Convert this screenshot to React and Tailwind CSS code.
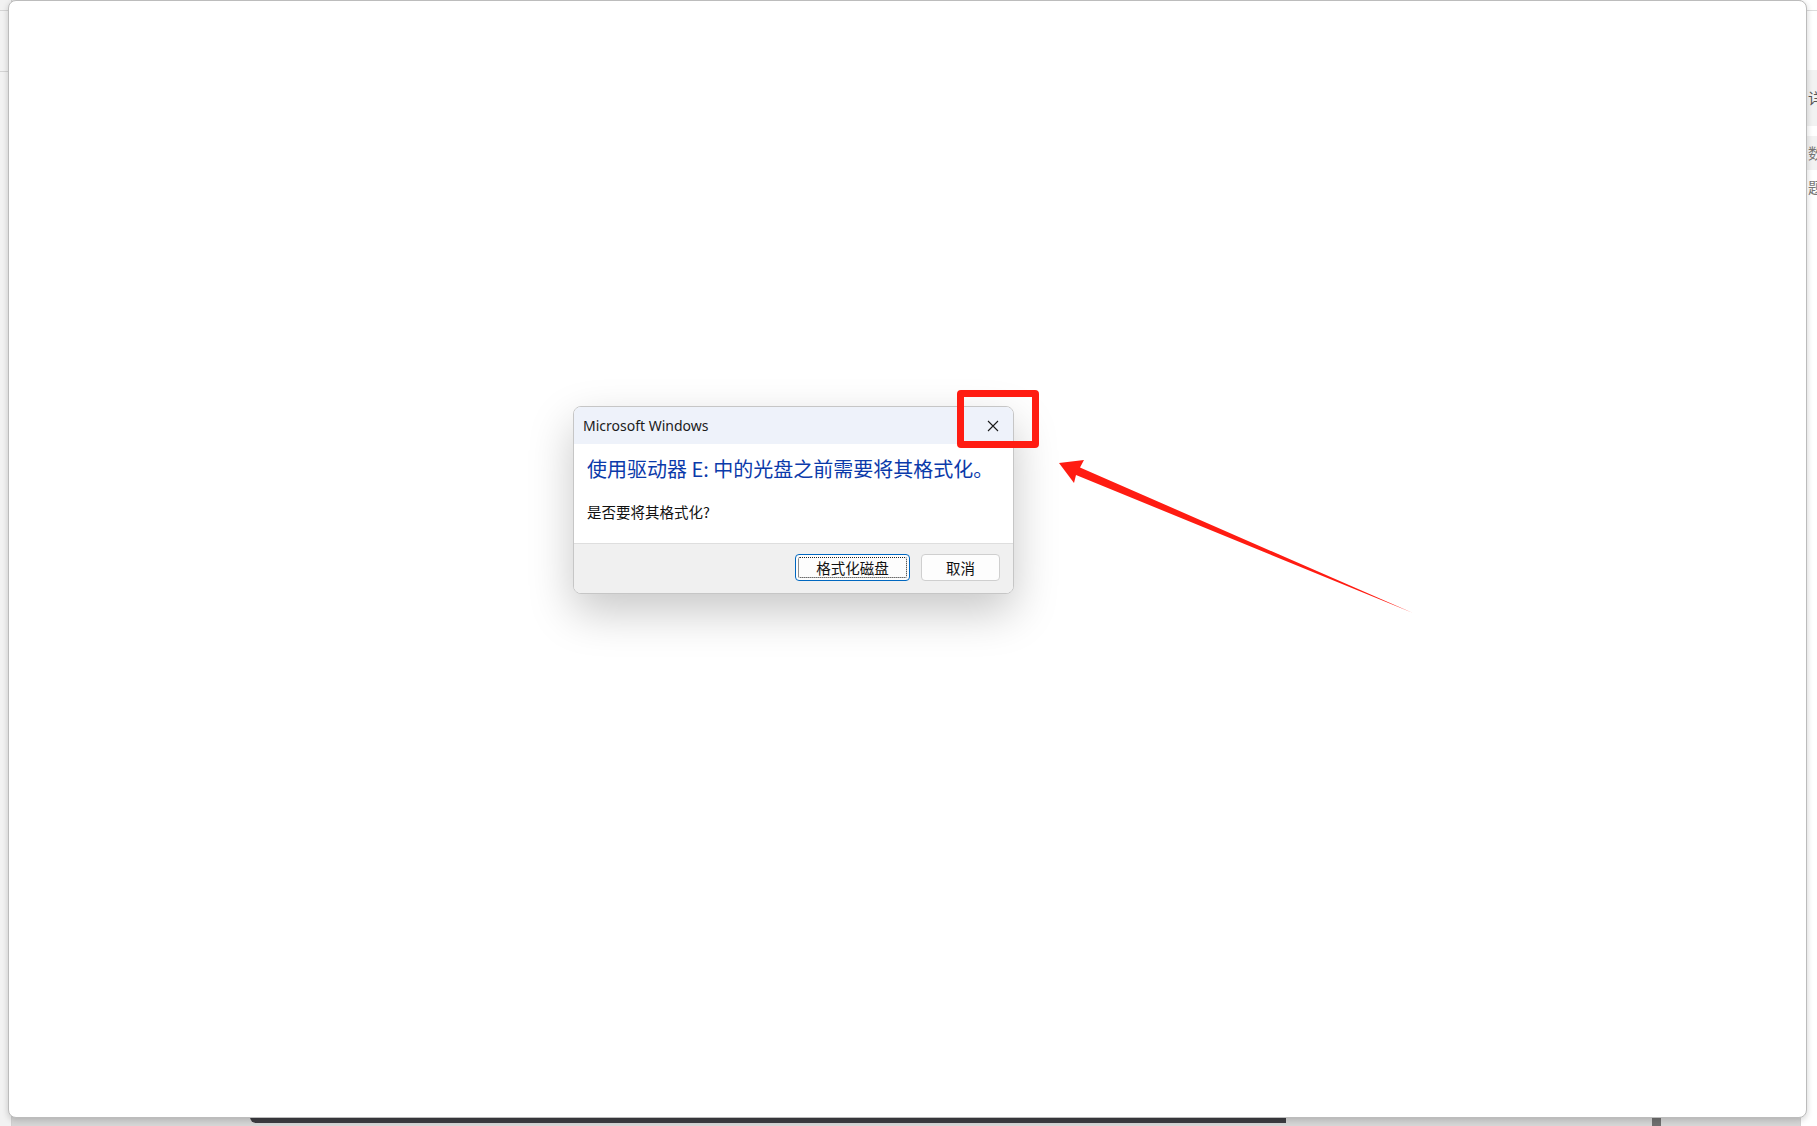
import React from "react";

const cjk = { fontFamily: '"Noto Sans CJK SC", "Noto Sans", sans-serif' };

function CloseIcon() {
  return (
    <svg width="12" height="12" viewBox="0 0 12 12" fill="none">
      <path d="M1 1L11 11M11 1L1 11" stroke="#1a1a1a" strokeWidth="1.1" />
    </svg>
  );
}

function Dialog() {
  return (
    <div className="absolute left-[573px] top-[406px] w-[441px] rounded-[8px] border border-[#c6c6c6] bg-white overflow-hidden shadow-[0_18px_45px_rgba(0,0,0,0.22)]">
      <div className="h-[37px] bg-[#eef2fa] flex items-center justify-between pl-[9px] pr-[14px]">
        <span
          className="text-[14px] text-[#1b1b1b]"
          style={{ fontFamily: '"Noto Sans", "Open Sans", sans-serif' }}
        >
          Microsoft Windows
        </span>
        <CloseIcon />
      </div>
      <div className="h-[99px] px-[13px] pt-[11px]" style={cjk}>
        <p className="text-[20px] leading-[28px] text-[#0b3aaa]">
          使用驱动器 E: 中的光盘之前需要将其格式化。
        </p>
        <p className="mt-[18px] text-[14.5px] leading-[22px] text-[#111]">是否要将其格式化?</p>
      </div>
      <div className="border-t border-[#dedede] bg-[#f0f0f0] flex justify-end gap-[11px] pt-[10px] pb-[12px] pr-[13px]" style={cjk}>
        <button className="w-[115px] h-[27px] rounded-[4px] border border-[#0067c0] bg-[#fdfdfd] p-[2px]">
          <span className="flex h-full w-full items-center justify-center border border-dotted border-[#222] rounded-[2px] text-[14.5px] text-[#111]">
            格式化磁盘
          </span>
        </button>
        <button className="w-[79px] h-[27px] rounded-[4px] border border-[#cfcfcf] bg-[#fdfdfd] text-[14.5px] text-[#111] flex items-center justify-center">
          取消
        </button>
      </div>
    </div>
  );
}

function Arrow() {
  return (
    <svg className="absolute left-[1040px] top-[450px] pointer-events-none" width="390" height="180" viewBox="0 0 390 180">
      <polygon
        points="19,13 44,10 40,17.5 373,163 36,25 34,33"
        fill="#ff1c12"
      />
    </svg>
  );
}

export default function App() {
  return (
    <div className="relative w-[1817px] h-[1126px] overflow-hidden bg-[linear-gradient(180deg,#e4e4e4,#d6d6d6)]">
      {/* windows behind */}
      <div className="absolute left-0 top-0 w-[12px] h-[1126px] bg-[#f2f2f2] border-r border-[#d0d0d0]">
        <div className="mt-[10px] border-t border-[#d4d4d4]" />
        <div className="mt-[60px] border-t border-[#d4d4d4]" />
      </div>
      <div className="absolute left-[1800px] top-0 w-[40px] h-[1126px] bg-white border-l border-[#d0d0d0]" style={cjk}>
        <div className="mt-[10px] border-t border-[#dcdcdc]" />
        <div className="mt-[59px] h-[56px] bg-[#f2f2f2] flex items-center pl-[7px] text-[15px] text-[#555]">详</div>
        <div className="mt-[10px] h-[34px] bg-[#f2f2f2] flex items-center pl-[7px] text-[15px] text-[#777]">数</div>
        <div className="h-[34px] flex items-center pl-[7px] text-[15px] text-[#777]">题</div>
      </div>
      <div className="absolute left-[250px] top-[1115px] w-[1036px] h-[8px] bg-[#3d3d42] rounded-bl-[6px]" />
      <div className="absolute left-[1652px] top-[1115px] w-[9px] h-[11px] bg-[#707070]" />

      {/* main window */}
      <div className="relative ml-[8px] w-[1799px] h-[1118px] bg-white border border-[#bcbcbc] rounded-[8px] shadow-[0_2px_6px_rgba(0,0,0,0.18)]" />

      <Dialog />

      {/* red annotation box */}
      <div className="absolute left-[957px] top-[390px] w-[82px] h-[58px] border-[7px] border-[#ff1c12] rounded-[4px]" />
      <Arrow />
    </div>
  );
}
